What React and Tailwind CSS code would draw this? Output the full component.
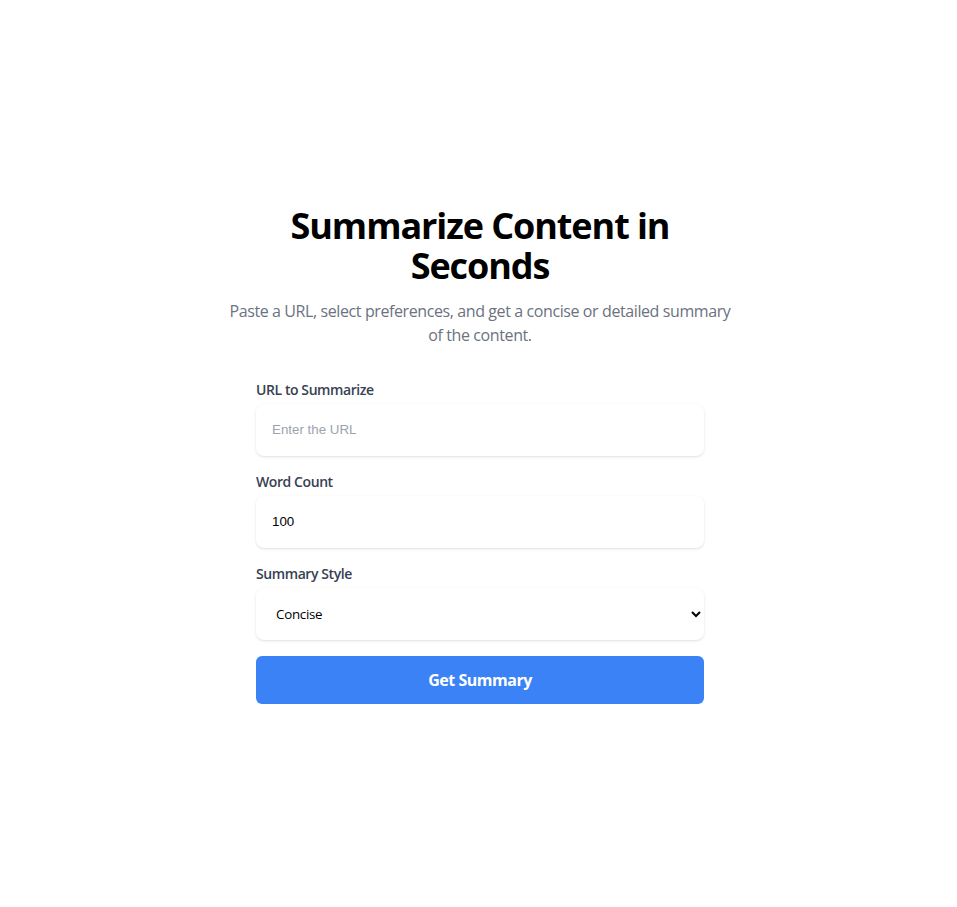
import React, { useState } from 'react'

function App() {
  const [url, setUrl] = useState('')
  const [wordCount, setWordCount] = useState(100)
  const [style, setStyle] = useState('concise')

  return (
    <div className="min-h-screen bg-white flex items-center justify-center pl-[3px] pt-[3px] font-['Open_Sans',sans-serif]">
      <div className="w-[540px]">
        {/* Header */}
        <h1 className="text-4xl font-bold text-black text-center leading-10 tracking-[-0.03em] mb-[13px] px-[60px]">
          Summarize Content in Seconds
        </h1>
        <p className="text-base text-[#6b7280] text-center leading-6 tracking-[-0.025em] mb-[33px] px-4">
          Paste a URL, select preferences, and get a concise or detailed summary of the content.
        </p>

        {/* Form */}
        <form className="w-[448px] mx-auto space-y-4" onSubmit={e => e.preventDefault()}>
          <div>
            <label className="block text-sm font-semibold text-[#374151] tracking-[-0.03em] mb-1">URL to Summarize</label>
            <input
              type="text"
              value={url}
              onChange={e => setUrl(e.target.value)}
              placeholder="Enter the URL"
              className="w-full px-4 py-4 text-[13.33px] leading-5 rounded-lg shadow-sm bg-white outline-none placeholder-[#9ca3af] font-['Liberation_Sans',sans-serif]"
            />
          </div>
          <div>
            <label className="block text-sm font-semibold text-[#374151] tracking-[-0.03em] mb-1">Word Count</label>
            <input
              type="number"
              value={wordCount}
              onChange={e => setWordCount(e.target.value)}
              className="w-full px-4 py-4 text-[13.33px] leading-5 rounded-lg shadow-sm bg-white outline-none text-black font-['Liberation_Sans',sans-serif]"
            />
          </div>
          <div>
            <label className="block text-sm font-semibold text-[#374151] tracking-[-0.03em] mb-1">Summary Style</label>
            <select
              value={style}
              onChange={e => setStyle(e.target.value)}
              className="w-full pl-4 pr-2 py-4 text-[13.33px] leading-5 tracking-[-0.02em] rounded-lg shadow-sm bg-white outline-none text-black"
            >
              <option value="concise">Concise</option>
              <option value="detailed">Detailed</option>
            </select>
          </div>
          <button
            type="submit"
            className="w-full h-12 bg-[#3b82f6] text-white font-bold tracking-[-0.03em] rounded-md"
          >
            Get Summary
          </button>
        </form>
      </div>
    </div>
  )
}

export default App
